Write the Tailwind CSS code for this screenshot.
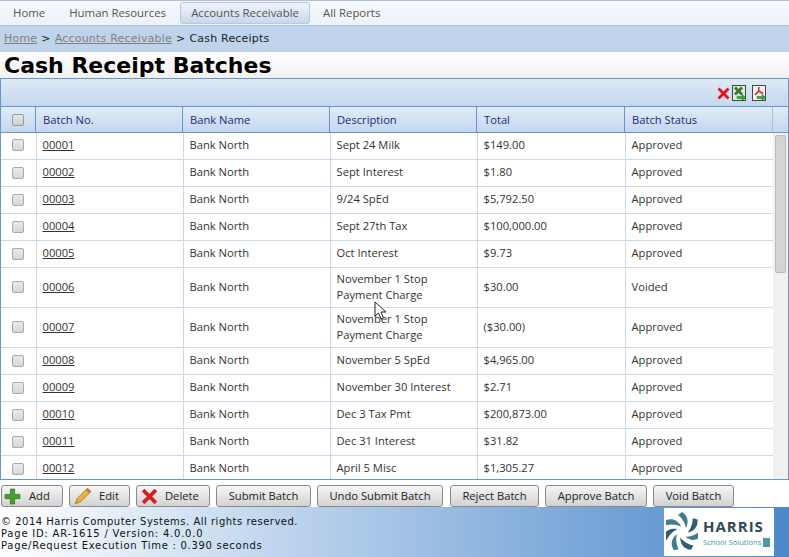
<!DOCTYPE html>
<html lang="en">
<head>
<meta charset="UTF-8">
<title>Cash Receipt Batches</title>
<script src="https://cdn.jsdelivr.net/npm/@tailwindcss/browser@4"></script>
</head>
<body class="w-[789px] h-[557px] overflow-hidden bg-white font-['Open_Sans','Noto_Sans',sans-serif] text-[11.2px] text-[#333] relative">

<!-- Top nav -->
<div class="h-[26px] flex items-center pl-[13px] bg-gradient-to-b from-[#f6f8fc] to-[#eef2f9] border-t border-[#a9c1de] border-b text-[11.4px] text-[#555]">
  <span>Home</span>
  <span class="ml-[24px]">Human Resources</span>
  <span class="ml-[14px] w-[130px] h-[22px] flex items-center justify-center rounded-[3px] border border-[#b9c9dc] bg-gradient-to-b from-[#f0f4fa] to-[#c6d8ec]">Accounts Receivable</span>
  <span class="ml-[13px]">All Reports</span>
</div>

<!-- Breadcrumb -->
<div class="h-[26px] flex items-center pl-[4px] pt-[1px] gap-[4px] bg-[#bfd4ea] font-['DejaVu_Sans',sans-serif] text-[11px] tracking-[0.2px] text-[#222]">
  <a class="underline text-[#808080]">Home</a><span>&gt;</span><a class="underline text-[#808080]">Accounts Receivable</a><span>&gt;</span><span>Cash Receipts</span>
</div>

<!-- Title -->
<div class="h-[26px] flex items-center pl-[4px] pt-[1px] bg-gradient-to-b from-white to-[#f1f1f1] font-['DejaVu_Sans',sans-serif] text-[22px] font-bold text-black">Cash Receipt Batches</div>

<!-- Grid -->
<div class="h-[402px] border border-[#6d95c4] overflow-hidden">
  <div class="h-[28px] flex items-center justify-end gap-[3px] pr-[21px] bg-gradient-to-b from-[#dfeaf6] to-[#c3d7ee] border-b border-[#6d95c4]">
    <svg class="w-[13px] h-[13px] mt-[2px] -mr-[1px]" viewBox="0 0 13 13"><path d="M1.5 1.5L11.5 11.5M11.5 1.5L1.5 11.5" stroke="#e8141c" stroke-width="2.8"/></svg>
    <svg class="w-[15px] h-[16px]" viewBox="0 0 15 16"><rect x=".5" y=".5" width="13" height="15" fill="#dfe9df" stroke="#444"/><path d="M3 2.5L10 9.5M10 2.5L3 9.5" stroke="#2e7d32" stroke-width="2.8"/><path d="M5 11.5H10V9.5L14 12.5L10 15.5V13.5H5Z" fill="#3aa63a" stroke="#1f6f1f" stroke-width=".5"/></svg>
    <svg class="ml-[2px] w-[15px] h-[16px]" viewBox="0 0 15 16"><rect x=".5" y=".5" width="13" height="15" fill="#f5f2f2" stroke="#444"/><path d="M7 2L6.5 6L3 10M6.5 6L11 8.5" fill="none" stroke="#d8262c" stroke-width="1.5"/><path d="M5 11.5H10V9.5L14 12.5L10 15.5V13.5H5Z" fill="#3aa63a" stroke="#1f6f1f" stroke-width=".5"/></svg>
  </div>

  <div class="h-[26px] flex bg-gradient-to-b from-[#e2ecf8] to-[#c3d7ee] border-b border-[#6d95c4] text-[#1f2a78]">
    <div class="w-[35px] border-r border-[#6d95c4] flex items-center justify-center"><span class="w-[12px] h-[12px] rounded-[2px] border border-[#999] bg-gradient-to-b from-[#e8e8e8] to-[#d0d0d0]"></span></div>
    <div class="w-[147px] border-r border-[#6d95c4] flex items-center pl-[7px] pt-[1px]">Batch No.</div>
    <div class="w-[147px] border-r border-[#6d95c4] flex items-center pl-[7px] pt-[1px]">Bank Name</div>
    <div class="w-[147px] border-r border-[#6d95c4] flex items-center pl-[7px] pt-[1px]">Description</div>
    <div class="w-[148px] border-r border-[#6d95c4] flex items-center pl-[7px] pt-[1px]">Total</div>
    <div class="w-[148px] border-r border-[#a9c1de] flex items-center pl-[7px] pt-[1px]">Batch Status</div>
  </div>

  <div class="flex">
    <div class="w-[772px] h-[346px] overflow-hidden shrink-0">
      <table class="-mt-[1px] -ml-[1px] w-[773px] table-fixed border-collapse [&_td]:border-r [&_td]:border-b [&_td]:border-[#cfd8e6] [&_td]:pl-[6px] [&_td:first-child]:pl-0 [&_td]:align-middle [&_tr]:h-[27px]">
        <colgroup><col class="w-[36px]"><col class="w-[147px]"><col class="w-[147px]"><col class="w-[147px]"><col class="w-[148px]"><col class="w-[148px]"></colgroup>
        <tbody>
          <tr><td><span class="block w-[12px] h-[12px] mx-auto rounded-[2px] border border-[#aaa] bg-gradient-to-b from-[#eaeaea] to-[#d6d6d6]"></span></td><td><a class="underline">00001</a></td><td>Bank North</td><td>Sept 24 Milk</td><td>$149.00</td><td>Approved</td></tr>
          <tr><td><span class="block w-[12px] h-[12px] mx-auto rounded-[2px] border border-[#aaa] bg-gradient-to-b from-[#eaeaea] to-[#d6d6d6]"></span></td><td><a class="underline">00002</a></td><td>Bank North</td><td>Sept Interest</td><td>$1.80</td><td>Approved</td></tr>
          <tr><td><span class="block w-[12px] h-[12px] mx-auto rounded-[2px] border border-[#aaa] bg-gradient-to-b from-[#eaeaea] to-[#d6d6d6]"></span></td><td><a class="underline">00003</a></td><td>Bank North</td><td>9/24 SpEd</td><td>$5,792.50</td><td>Approved</td></tr>
          <tr><td><span class="block w-[12px] h-[12px] mx-auto rounded-[2px] border border-[#aaa] bg-gradient-to-b from-[#eaeaea] to-[#d6d6d6]"></span></td><td><a class="underline">00004</a></td><td>Bank North</td><td>Sept 27th Tax</td><td>$100,000.00</td><td>Approved</td></tr>
          <tr><td><span class="block w-[12px] h-[12px] mx-auto rounded-[2px] border border-[#aaa] bg-gradient-to-b from-[#eaeaea] to-[#d6d6d6]"></span></td><td><a class="underline">00005</a></td><td>Bank North</td><td>Oct Interest</td><td>$9.73</td><td>Approved</td></tr>
          <tr class="!h-[40px]"><td><span class="block w-[12px] h-[12px] mx-auto rounded-[2px] border border-[#aaa] bg-gradient-to-b from-[#eaeaea] to-[#d6d6d6]"></span></td><td><a class="underline">00006</a></td><td>Bank North</td><td class="leading-[16px]">November 1 Stop<br>Payment Charge</td><td>$30.00</td><td>Voided</td></tr>
          <tr class="!h-[40px]"><td><span class="block w-[12px] h-[12px] mx-auto rounded-[2px] border border-[#aaa] bg-gradient-to-b from-[#eaeaea] to-[#d6d6d6]"></span></td><td><a class="underline">00007</a></td><td>Bank North</td><td class="leading-[16px]">November 1 Stop<br>Payment Charge</td><td>($30.00)</td><td>Approved</td></tr>
          <tr><td><span class="block w-[12px] h-[12px] mx-auto rounded-[2px] border border-[#aaa] bg-gradient-to-b from-[#eaeaea] to-[#d6d6d6]"></span></td><td><a class="underline">00008</a></td><td>Bank North</td><td>November 5 SpEd</td><td>$4,965.00</td><td>Approved</td></tr>
          <tr><td><span class="block w-[12px] h-[12px] mx-auto rounded-[2px] border border-[#aaa] bg-gradient-to-b from-[#eaeaea] to-[#d6d6d6]"></span></td><td><a class="underline">00009</a></td><td>Bank North</td><td>November 30 Interest</td><td>$2.71</td><td>Approved</td></tr>
          <tr><td><span class="block w-[12px] h-[12px] mx-auto rounded-[2px] border border-[#aaa] bg-gradient-to-b from-[#eaeaea] to-[#d6d6d6]"></span></td><td><a class="underline">00010</a></td><td>Bank North</td><td>Dec 3 Tax Pmt</td><td>$200,873.00</td><td>Approved</td></tr>
          <tr><td><span class="block w-[12px] h-[12px] mx-auto rounded-[2px] border border-[#aaa] bg-gradient-to-b from-[#eaeaea] to-[#d6d6d6]"></span></td><td><a class="underline">00011</a></td><td>Bank North</td><td>Dec 31 Interest</td><td>$31.82</td><td>Approved</td></tr>
          <tr><td><span class="block w-[12px] h-[12px] mx-auto rounded-[2px] border border-[#aaa] bg-gradient-to-b from-[#eaeaea] to-[#d6d6d6]"></span></td><td><a class="underline">00012</a></td><td>Bank North</td><td>April 5 Misc</td><td>$1,305.27</td><td>Approved</td></tr>
        </tbody>
      </table>
    </div>
    <!-- scrollbar -->
    <div class="flex-1 h-[346px] bg-[#f0f0f0] px-[2px] pt-[2px]"><div class="h-[138px] rounded-[2px] bg-[#d4d4d4] border border-[#bbb]"></div></div>
  </div>
</div>

<!-- Actions -->
<div class="h-[27px] pt-[5px] pl-[1px] flex gap-[6px] bg-white text-[#222]">
  <button class="h-[22px] w-[62px] flex items-center pl-[2px] gap-[8px] rounded-[3px] border border-[#8a8a8a] bg-gradient-to-b from-[#f6f6f6] to-[#d2d2d2]"><svg class="w-[17px] h-[17px]" viewBox="0 0 16 16"><path d="M6 1H10V6H15V10H10V15H6V10H1V6H6Z" fill="#4a9e2f" stroke="#2f7a1e" stroke-width=".7"/></svg>Add</button>
  <button class="h-[22px] w-[61px] flex items-center pl-[4px] gap-[7px] rounded-[3px] border border-[#8a8a8a] bg-gradient-to-b from-[#f6f6f6] to-[#d2d2d2]"><svg class="w-[18px] h-[18px]" viewBox="0 0 16 16"><path d="M1 15L3 10L12 1L15 4L6 13Z" fill="#e8b23c" stroke="#9a6f1a" stroke-width=".7"/><path d="M12 1L15 4L13.5 5.5L10.5 2.5Z" fill="#d96a4a"/></svg>Edit</button>
  <button class="h-[22px] w-[74px] flex items-center pl-[4px] gap-[7px] rounded-[3px] border border-[#8a8a8a] bg-gradient-to-b from-[#f6f6f6] to-[#d2d2d2]"><svg class="w-[17px] h-[17px]" viewBox="0 0 16 16"><path d="M2 2L14 14M14 2L2 14" stroke="#d42020" stroke-width="3.4"/></svg>Delete</button>
  <button class="h-[22px] w-[95px] rounded-[3px] border border-[#8a8a8a] bg-gradient-to-b from-[#f6f6f6] to-[#d2d2d2]">Submit Batch</button>
  <button class="h-[22px] w-[126px] rounded-[3px] border border-[#8a8a8a] bg-gradient-to-b from-[#f6f6f6] to-[#d2d2d2]">Undo Submit Batch</button>
  <button class="ml-[1px] h-[22px] w-[89px] rounded-[3px] border border-[#8a8a8a] bg-gradient-to-b from-[#f6f6f6] to-[#d2d2d2]">Reject Batch</button>
  <button class="h-[22px] w-[102px] rounded-[3px] border border-[#8a8a8a] bg-gradient-to-b from-[#f6f6f6] to-[#d2d2d2]">Approve Batch</button>
  <button class="h-[22px] w-[81px] rounded-[3px] border border-[#8a8a8a] bg-gradient-to-b from-[#f6f6f6] to-[#d2d2d2]">Void Batch</button>
</div>

<!-- Footer -->
<div class="h-[50px] flex justify-between bg-gradient-to-r from-white to-[#4a88c9] font-['DejaVu_Sans',sans-serif] text-[10px] leading-[12px] text-[#111]">
  <div class="pt-[9px] pl-[1px]">
    <div class="tracking-[0.5px]">© 2014 Harris Computer Systems. All rights reserved.</div>
    <div class="tracking-[0.78px]">Page ID: AR-1615 / Version: 4.0.0.0</div>
    <div class="tracking-[0.72px]">Page/Request Execution Time : 0.390 seconds</div>
  </div>
  <div class="mt-[1px] mr-[15px] w-[110px] h-[48px] bg-white flex items-center pl-[2px] gap-[5px]">
    <!-- swirl logo -->
    <svg class="w-[32px] h-[42px] shrink-0" viewBox="0 0 32 42">
      <g fill="#3f7f8c">
        <path d="M16 1C22 5 23 11 20 17C19 12 16 7 12 4Z"/>
        <path d="M16 1C22 5 23 11 20 17C19 12 16 7 12 4Z" transform="rotate(51 16 21)" fill="#2f5f6e"/>
        <path d="M16 1C22 5 23 11 20 17C19 12 16 7 12 4Z" transform="rotate(102 16 21)"/>
        <path d="M16 1C22 5 23 11 20 17C19 12 16 7 12 4Z" transform="rotate(153 16 21)" fill="#2f5f6e"/>
        <path d="M16 1C22 5 23 11 20 17C19 12 16 7 12 4Z" transform="rotate(204 16 21)"/>
        <path d="M16 1C22 5 23 11 20 17C19 12 16 7 12 4Z" transform="rotate(255 16 21)" fill="#2f5f6e"/>
        <path d="M16 1C22 5 23 11 20 17C19 12 16 7 12 4Z" transform="rotate(306 16 21)"/>
      </g>
    </svg>
    <div class="font-['Open_Sans',sans-serif] tracking-normal">
      <div class="text-[15px] leading-[20px] font-bold tracking-[1px] text-[#2f4a55]">HARRIS</div>
      <div class="flex items-center gap-[2px] text-[7.6px] leading-[12px] text-[#4f97a3]">School Solutions<span class="w-[7px] h-[9px] bg-[#4f97a3]"></span></div>
    </div>
  </div>
</div>

<!-- Mouse cursor -->
<svg class="absolute left-[374px] top-[301px] w-[13px] h-[19px]" viewBox="0 0 13 19"><path d="M1 1V15L4.5 12L7 18L9.5 17L7 11H12Z" fill="#fff" stroke="#222" stroke-width="1"/></svg>
</body>
</html>
